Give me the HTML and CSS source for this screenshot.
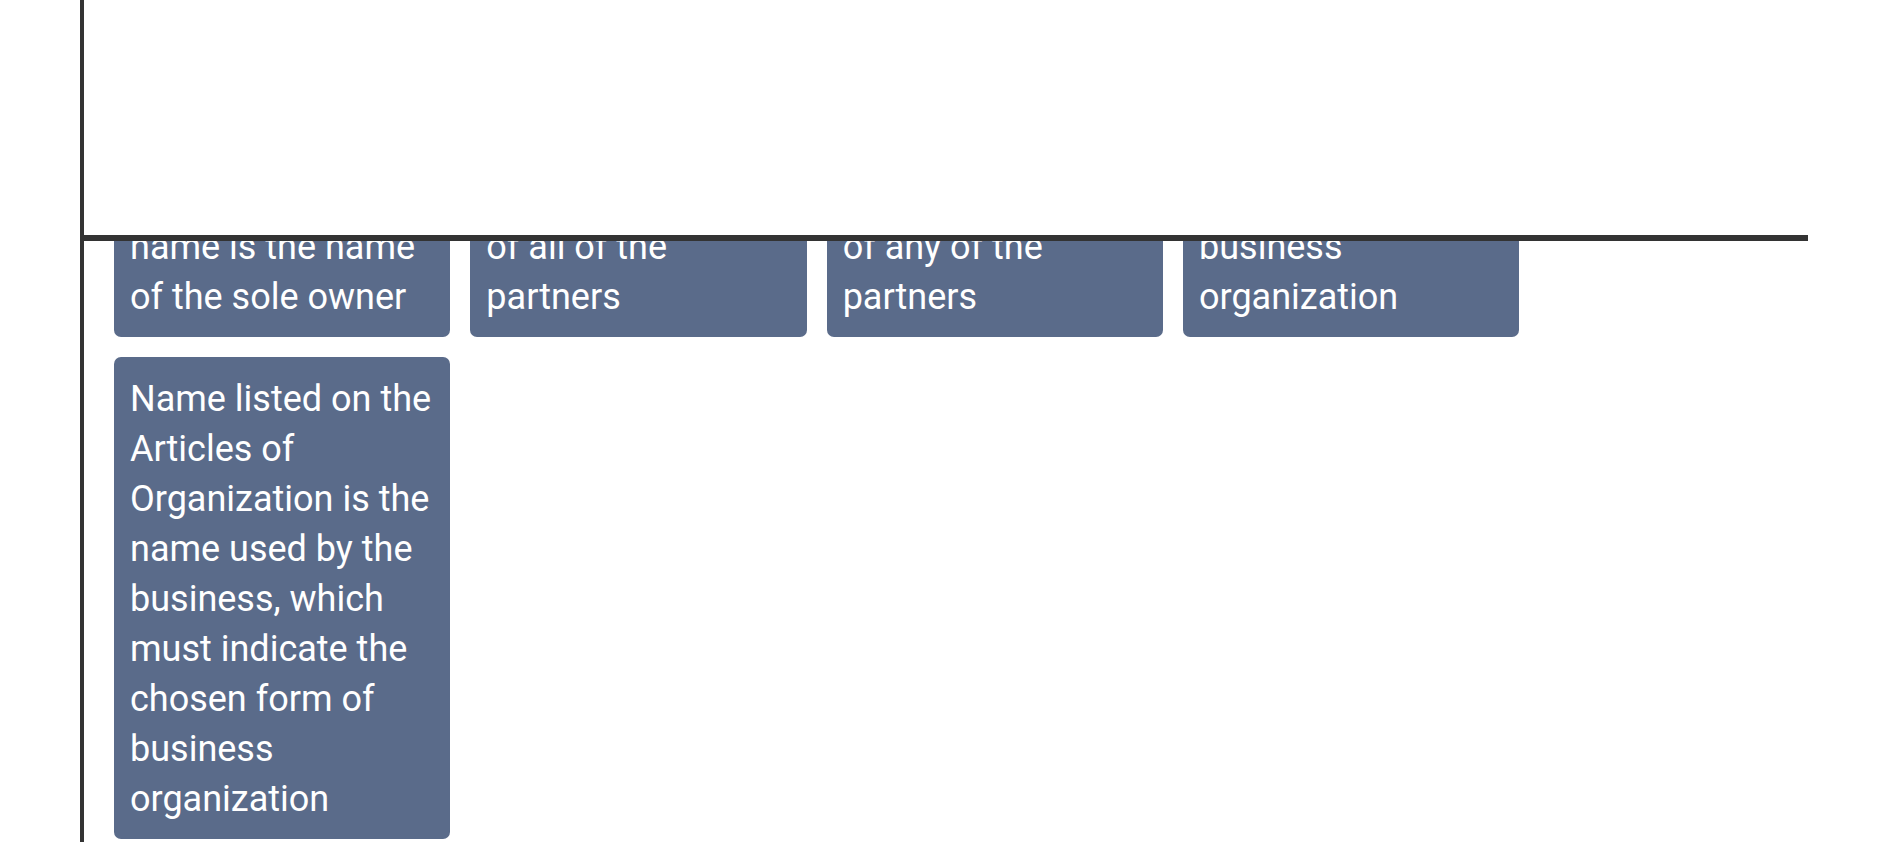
FILE: index.html
```html
<!DOCTYPE html>
<html lang="en">
<head>
<meta charset="utf-8">
<title>Business names</title>
<link rel="stylesheet" href="styles.css">
</head>
<body>
<div class="frame">
  <div class="top-space"></div>
  <div class="panel">
    <div class="cards">
      <div class="card">The business<br>name is the name of the sole owner</div>
      <div class="card">Last names<br>of all of the partners</div>
      <div class="card">Last name<br>of any of the partners</div>
      <div class="card">Indicates form of<br>business organization</div>
      <div class="card">Name listed on the Articles of Organization is the name used by the business, which must indicate the chosen form of business organization</div>
    </div>
  </div>
</div>
</body>
</html>
```
FILE: styles.css
```css
html, body {
  margin: 0;
  padding: 0;
  background: #ffffff;
}
.frame {
  margin-left: 80px;
  border-left: 4px solid #333333;
  height: 842px;
  overflow: hidden;
}
.top-space {
  height: 235px;
}
.panel {
  width: 1724px;
  border-top: 6px solid #333333;
  height: 601px;
  overflow: hidden;
}
.cards {
  display: flex;
  flex-wrap: wrap;
  align-items: stretch;
  gap: 20px;
  padding: 0 30px;
  margin-top: -86px;
}
.card {
  box-sizing: border-box;
  width: 336.33px;
  padding: 17px 16px 15px;
  border-radius: 7px;
  background: #5a6b8a;
  color: #ffffff;
  font-family: Roboto, "Liberation Sans", sans-serif;
  font-size: 36px;
  line-height: 50px;
}
```
